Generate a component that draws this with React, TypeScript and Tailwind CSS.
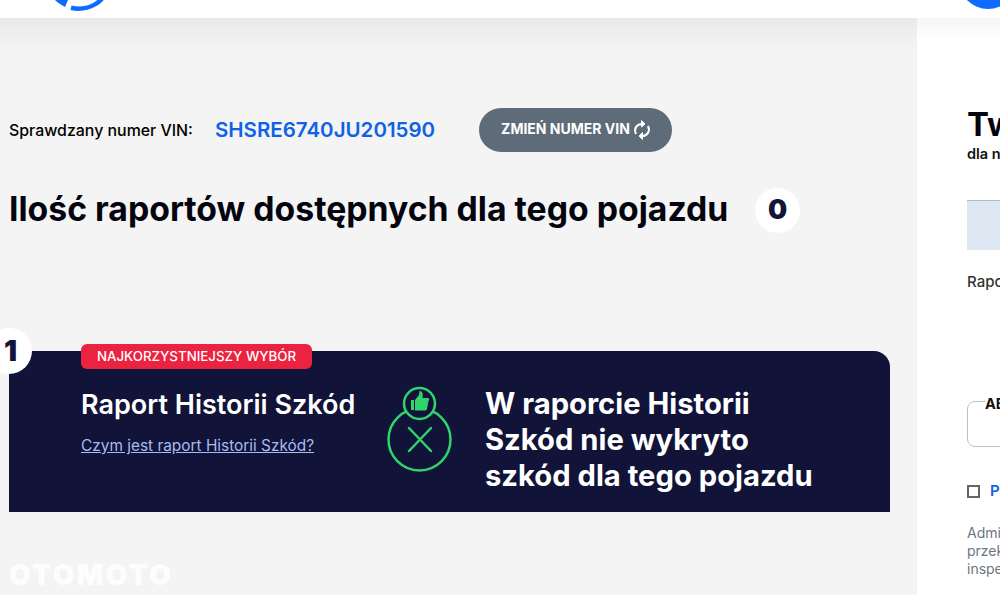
export default function App() {
  return (
    <div className="relative flex h-[595px] w-[1000px] flex-col overflow-hidden bg-white font-['Inter',sans-serif]">
      <header className="z-10 flex h-[18px] shrink-0 items-start justify-between bg-white">
        <svg className="ml-[54px]" width="54" height="18" viewBox="0 0 54 18" fill="none">
          <path d="M1 0 C3 2 7 5 11 7 L14 0 Z" fill="#0f6bff" />
          <path d="M17 7.800 C27 10 39 8 48 -1" stroke="#0f6bff" strokeWidth="4.500" />
        </svg>
        <svg width="36" height="18" viewBox="0 0 36 18">
          <circle cx="24" cy="-20" r="29" fill="#0f6bff" />
        </svg>
      </header>
      <div className="flex min-h-0 flex-1">
        <main className="w-[917px] shrink-0 bg-[linear-gradient(#e9e9e9,#f4f4f4_32px)] pl-[9px]">
          <div className="mt-[90px] flex h-[44px] items-center">
            <span className="mt-[2px] w-[206px] text-[15.900px] font-medium text-black">Sprawdzany numer VIN:</span>
            <span className="w-[264px] text-[20.500px] font-semibold text-[#0f62e6]">SHSRE6740JU201590</span>
            <button className="flex h-[44px] w-[193px] items-center justify-center gap-[2px] rounded-[22px] bg-[#5e6b78] pl-[2px] text-[14px] leading-[20px] font-bold text-white">
              <span className="-mt-[2px]">ZMIEŃ NUMER VIN</span>
              <svg width="20" height="22" viewBox="0 0 20 22" fill="none" stroke="white" strokeWidth="2">
                <path d="M4 15 C1.500 10 4.500 5 10 5" />
                <path d="M16 7 C18.500 12 15.500 17 10 17" />
                <path d="M9.500 1.500 L13 5 L9.500 8 Z" fill="white" strokeWidth="1" />
                <path d="M10.500 13.500 L7 17 L10.500 20.500 Z" fill="white" strokeWidth="1" />
              </svg>
            </button>
          </div>
          <div className="mt-[36px] flex h-[45px] items-center">
            <h1 className="-mt-[2px] w-[746px] whitespace-nowrap text-[33.750px] font-bold text-[#050510]">Ilość raportów dostępnych dla tego pojazdu</h1>
            <div className="flex h-[45px] w-[45px] items-center justify-center rounded-full bg-white text-[27px] font-black text-[#12143a]">0</div>
          </div>
          <section className="relative mt-[118px] flex h-[161px] w-[881px] rounded-tr-[16px] rounded-tl-[16px] bg-[#111338] pl-[72px] text-white">
            <div className="absolute left-[-23px] top-[-23px] flex h-[46px] w-[46px] items-center justify-center rounded-full bg-white pl-[3px] text-[29px] font-black text-[#12143a]">1</div>
            <div className="absolute left-[72px] top-[-7px] flex h-[25px] w-[231px] items-center justify-center rounded-[6px] bg-[#ea2340] text-[13.300px] font-medium">NAJKORZYSTNIEJSZY WYBÓR</div>
            <div className="w-[306px] pt-[36px]">
              <h2 className="whitespace-nowrap text-[27px] leading-[36px] font-semibold">Raport Historii Szkód</h2>
              <a className="mt-[11px] block text-[15.400px] text-[#a6bdf0] underline">Czym jest raport Historii Szkód?</a>
            </div>
            <svg className="mt-[35px]" width="66" height="90" viewBox="0 0 66 90" fill="none" stroke="#2fd46c" strokeWidth="2.500">
              <circle cx="32.500" cy="53.500" r="31" />
              <circle cx="32.500" cy="17.500" r="15.500" fill="#111338" />
              <path d="M22 42 L44 65 M44 42 L22 65" strokeLinecap="round" />
              <path fill="#2fd46c" stroke="none" d="M24 14 h3 v10 h-3 Z M28 14 L32 9 L32.500 5 C35 5 36.500 7 35.500 12 L41 12 C42.500 12 42.500 14 41.500 15 L40 23 C39.500 24 39 24.500 38 24.500 L28 24.500 Z" />
            </svg>
            <div className="ml-[32px] whitespace-nowrap pt-[35px] text-[29.200px] leading-[36px] font-bold">
              W raporcie Historii<br />Szkód nie wykryto<br />szkód dla tego pojazdu
            </div>
          </section>
        </main>
        <aside className="min-w-0 flex-1 overflow-hidden bg-[linear-gradient(#f6f6f6,#ffffff_24px)] pl-[50px]">
          <div className="w-[300px]">
            <h2 className="mt-[86px] whitespace-nowrap text-[33px] leading-[40px] font-bold text-[#050510]">Twój koszyk</h2>
            <p className="whitespace-nowrap text-[14.500px] leading-[20px] font-semibold text-[#111]">dla numeru VIN</p>
            <div className="mt-[36px] h-[50px] border-t border-[#aebccd] bg-[#dde8f3]" />
            <p className="mt-[22px] text-[15px] leading-[20px] font-medium text-[#333]">Raport</p>
            <div className="mt-[109px] h-[46px] rounded-l-[8px] border border-[#b4c2d2] pl-[17px]">
              <span className="relative -top-[8px] block w-fit bg-white text-[14.500px] leading-[20px] font-bold text-[#111]">ABONAMENT</span>
            </div>
            <div className="mt-[34px] flex items-center gap-[10px]">
              <span className="h-[13px] w-[13px] border-2 border-[#666]" />
              <span className="text-[15px] leading-[20px] font-semibold text-[#0f62e6]">Polityka</span>
            </div>
            <p className="mt-[23px] whitespace-nowrap text-[14px] leading-[18px] text-[#6b7682]">Administrator<br />przekazuje<br />inspekcji</p>
          </div>
        </aside>
      </div>
      <div className="absolute left-[9px] top-[554px] text-[28px] font-black tracking-[2.300px] text-white opacity-90">OTOMOTO</div>
    </div>
  );
}
